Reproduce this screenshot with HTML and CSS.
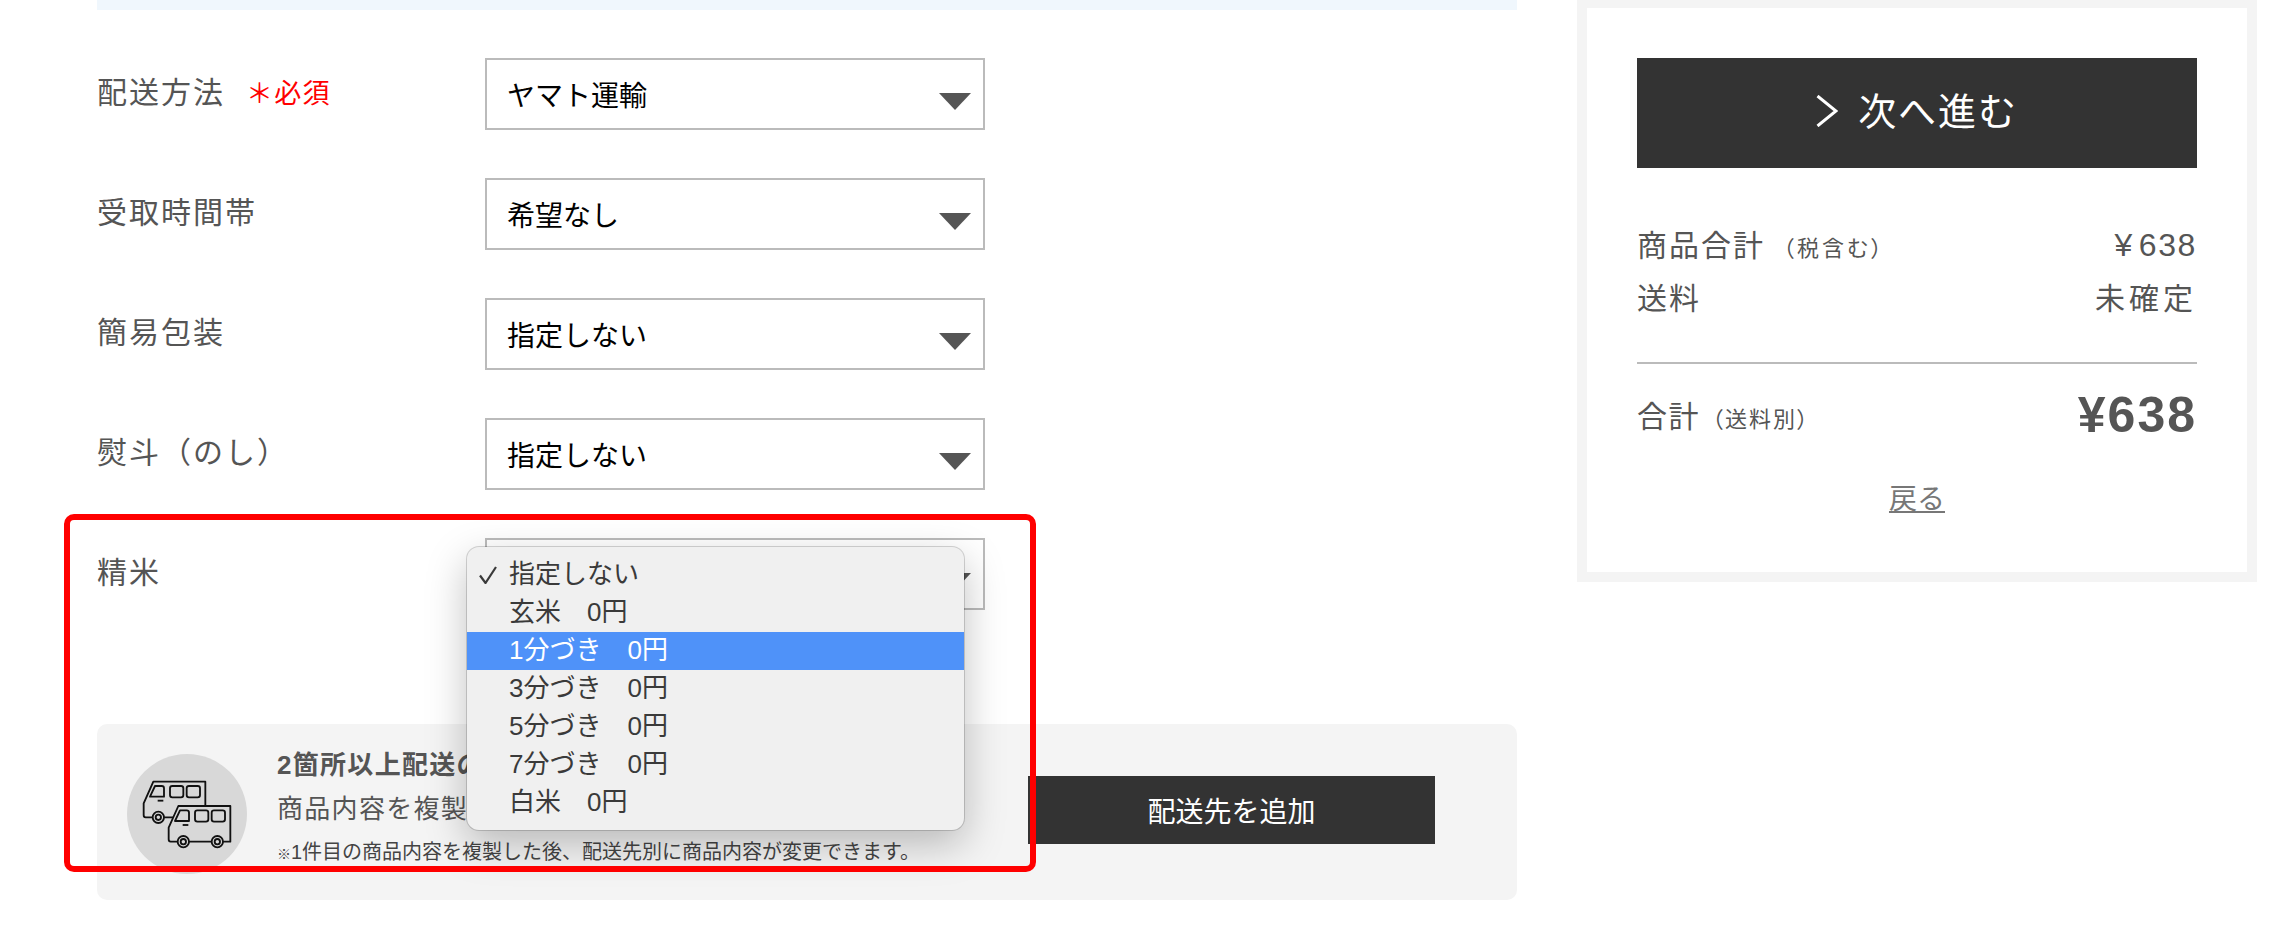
FILE: index.html
```html
<!DOCTYPE html>
<html lang="ja">
<head>
    <meta charset="UTF-8">
    <meta name="viewport" content="width=device-width, initial-scale=1.0">
    <title>配送方法の選択</title>
    <link rel="stylesheet" href="styles.css">
</head>
<body>
    <div class="page">
        <main class="main">
            <div class="notice-bar"></div>
            <form class="delivery-form">
                <div class="form-row">
                    <div class="form-label">配送方法<span class="required">＊必須</span></div>
                    <div class="select-wrap"><select><option>ヤマト運輸</option></select></div>
                </div>
                <div class="form-row">
                    <div class="form-label">受取時間帯</div>
                    <div class="select-wrap"><select><option>希望なし</option></select></div>
                </div>
                <div class="form-row">
                    <div class="form-label">簡易包装</div>
                    <div class="select-wrap"><select><option>指定しない</option></select></div>
                </div>
                <div class="form-row">
                    <div class="form-label">熨斗（のし）</div>
                    <div class="select-wrap"><select><option>指定しない</option></select></div>
                </div>
                <div class="form-row">
                    <div class="form-label">精米</div>
                    <div class="select-wrap">
                        <select><option>指定しない</option></select>
                        <ul class="select-menu">
                            <li class="menu-item">
                                <svg class="menu-check" viewBox="0 0 18 18" width="18" height="18"><path d="M1 9.5 L6.5 17 L17 1" fill="none" stroke="#3a3a3a" stroke-width="2.2"/></svg>
                                指定しない
                            </li>
                            <li class="menu-item">玄米　0円</li>
                            <li class="menu-item is-active">1分づき　0円</li>
                            <li class="menu-item">3分づき　0円</li>
                            <li class="menu-item">5分づき　0円</li>
                            <li class="menu-item">7分づき　0円</li>
                            <li class="menu-item">白米　0円</li>
                        </ul>
                    </div>
                </div>
            </form>
            <section class="add-address">
                <div class="van-badge">
                    <svg viewBox="0 0 360 360" width="120" height="120">
                        <defs>
                            <g id="van" fill="#d8d8d8" stroke="#111" stroke-width="5.5" stroke-linejoin="round">
                                <path d="M79 83 H235 V190 H56 Q50 190 50 183 V148 Z"/>
                                <path d="M84 96 H104 Q111 96 111 103 V128 H69 Z"/>
                                <rect x="129" y="96" width="40" height="34" rx="7"/>
                                <rect x="179" y="96" width="40" height="34" rx="7"/>
                                <path d="M92 140 H109"/>
                                <circle cx="94" cy="190" r="17"/>
                                <circle cx="94" cy="190" r="8"/>
                                <circle cx="196" cy="190" r="17"/>
                                <circle cx="196" cy="190" r="8"/>
                            </g>
                        </defs>
                        <use href="#van"/>
                        <use href="#van" x="75" y="73"/>
                    </svg>
                </div>
                <div class="add-text">
                    <p class="add-title"><b>2箇所以上配送の場合</b></p>
                    <p class="add-desc">商品内容を複製して追加できます</p>
                    <p class="add-note"><span class="note-mark">※</span>1件目の商品内容を複製した後、配送先別に商品内容が変更できます。</p>
                </div>
                <a class="add-button">配送先を追加</a>
            </section>
        </main>
        <aside class="summary">
            <a class="next-button">
                <svg viewBox="0 0 22 32" width="22" height="32"><path d="M1.5 1 L20 16 L1.5 31" fill="none" stroke="#fff" stroke-width="3"/></svg>
                <span>次へ進む</span>
            </a>
            <dl class="price-list">
                <div class="price-row"><dt>商品合計<small class="tax-note">（税含む）</small></dt><dd class="num"><span class="yen">¥</span>638</dd></div>
                <div class="price-row"><dt>送料</dt><dd class="pending">未確定</dd></div>
            </dl>
            <div class="total-row">
                <div>合計<small class="ship-note">（送料別）</small></div>
                <div class="total-price">¥638</div>
            </div>
            <a class="back-link">戻る</a>
        </aside>
        <div class="highlight-frame"></div>
    </div>
</body>
</html>
```

FILE: styles.css
```css
* {
    box-sizing: border-box;
}
html, body {
    margin: 0;
    height: 952px;
    overflow: hidden;
    background-color: #fff;
}
body {
    font-family: "Liberation Sans", "Noto Sans CJK JP", sans-serif;
    font-weight: 400;
    color: #555;
}
.page {
    position: relative;
    display: flex;
    align-items: flex-start;
    padding-left: 97px;
}
.main {
    width: 1420px;
}
.notice-bar {
    height: 10px;
    background-color: #f0f7fd;
}
.delivery-form {
    padding-top: 48px;
}
.form-row {
    display: flex;
    margin-bottom: 48px;
}
.form-row:last-child {
    margin-bottom: 114px;
}
.form-label {
    width: 388px;
    font-size: 30px;
    line-height: 69px;
    letter-spacing: 2px;
}
.required {
    margin-left: 21px;
    font-size: 27px;
    letter-spacing: 1.3px;
    color: #f00;
}
.select-wrap {
    position: relative;
    width: 500px;
    height: 72px;
}
.select-wrap select {
    appearance: none;
    width: 100%;
    height: 100%;
    padding: 5px 0 0 20px;
    border: 2px solid #bbb;
    border-radius: 0;
    background-color: #fff;
    font: inherit;
    font-size: 28px;
    color: #000;
}
.select-wrap::after {
    content: "";
    position: absolute;
    top: 35px;
    right: 14px;
    border-left: 16.5px solid transparent;
    border-right: 16.5px solid transparent;
    border-top: 17px solid #555;
}
.select-menu {
    position: absolute;
    z-index: 2;
    top: 9px;
    left: -18px;
    width: 497px;
    margin: 0;
    padding: 9px 0 8px;
    list-style: none;
    background-color: #f0f0f0;
    border-radius: 12px;
    box-shadow: 0 0 0 1px rgba(0, 0, 0, 0.16), 0 14px 40px rgba(0, 0, 0, 0.25);
}
.menu-item {
    position: relative;
    height: 38px;
    padding-left: 42px;
    font-size: 26px;
    line-height: 36px;
    color: #3a3a3a;
}
.menu-item.is-active {
    background-color: #4f92f9;
    color: #fff;
}
.menu-check {
    position: absolute;
    left: 12px;
    top: 10px;
}
.add-address {
    display: flex;
    align-items: center;
    height: 176px;
    padding: 0 82px 4px 30px;
    border-radius: 10px;
    background-color: #f4f4f4;
}
.van-badge {
    flex: none;
    width: 120px;
    height: 120px;
    margin-top: 7px;
    border-radius: 50%;
    background-color: #d8d8d8;
}
.add-text {
    flex: 1;
    margin-left: 30px;
}
.add-text p {
    margin: 0;
    line-height: 43px;
    white-space: nowrap;
}
.add-title {
    font-size: 26px;
    letter-spacing: 1.3px;
}
.add-title b {
    font-weight: 700;
}
.add-desc {
    padding-top: 1px;
    font-size: 26px;
    letter-spacing: 1.3px;
}
.add-note {
    margin-top: -1px;
    font-size: 20px;
    color: #444;
}
.note-mark {
    font-size: 14px;
}
.add-button {
    flex: none;
    display: flex;
    align-items: center;
    justify-content: center;
    width: 407px;
    height: 68px;
    background-color: #333;
    color: #fff;
    font-size: 28px;
}
.summary {
    width: 680px;
    height: 582px;
    margin-left: 60px;
    padding: 50px 50px 0;
    border: 10px solid #f4f4f4;
    border-top-width: 8px;
    background-color: #fff;
}
.next-button {
    display: flex;
    align-items: center;
    justify-content: center;
    gap: 20px;
    height: 110px;
    padding-bottom: 9px;
    background-color: #333;
    color: #fff;
    font-size: 38px;
    letter-spacing: 1.9px;
}
.next-button svg {
    margin-top: 5px;
}
.price-list {
    margin: 48px 0 0;
    padding-bottom: 40px;
    border-bottom: 2px solid #bbb;
}
.price-row {
    display: flex;
    justify-content: space-between;
    align-items: center;
    height: 53px;
    font-size: 30px;
    letter-spacing: 2px;
}
.price-row dt, .price-row dd {
    margin: 0;
}
.tax-note, .ship-note {
    font-size: 22px;
    font-feature-settings: "palt";
}
.tax-note {
    margin-left: 18px;
    letter-spacing: 3px;
}
.ship-note {
    margin-left: 12px;
    letter-spacing: 2px;
}
.price-row .num {
    padding-top: 5px;
    font-size: 32px;
    letter-spacing: 1.6px;
}
.yen {
    margin-right: 5px;
}
.price-row .pending {
    letter-spacing: 4px;
}
.total-row {
    display: flex;
    justify-content: space-between;
    align-items: center;
    height: 100px;
    font-size: 30px;
    letter-spacing: 1.5px;
}
.total-price {
    padding-top: 2px;
    font-size: 50px;
    font-weight: 700;
    letter-spacing: 2px;
}
.back-link {
    display: block;
    margin-top: 16px;
    text-align: center;
    font-size: 28px;
    line-height: 40px;
    color: #777;
    text-decoration: underline;
}
.highlight-frame {
    position: absolute;
    z-index: 3;
    left: 64px;
    top: 514px;
    width: 972px;
    height: 358px;
    border: 6px solid #f00;
    border-radius: 10px;
}
```
